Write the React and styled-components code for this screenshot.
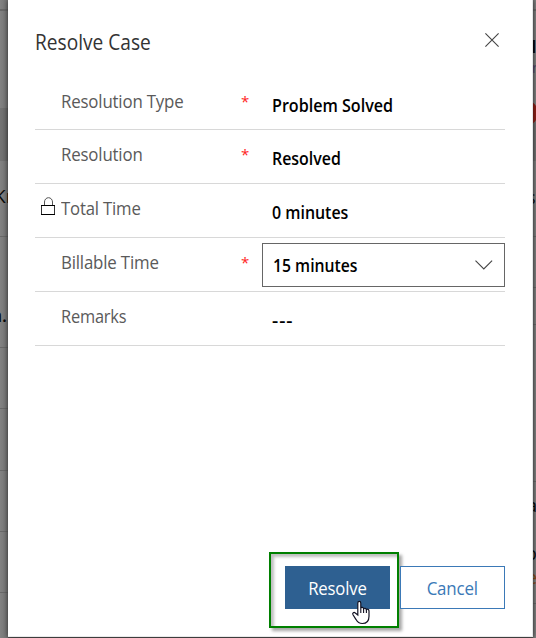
import React from "react";
import styled, { createGlobalStyle } from "styled-components";

const Global = createGlobalStyle`
  * { box-sizing: border-box; }
  html, body { margin: 0; padding: 0; overflow: hidden; }
  body { font-family: "Open Sans", "Noto Sans", sans-serif; background: #808080; }
`;

const Screen = styled.div`
  width: 536px;
  height: 638px;
  display: grid;
  grid-template-columns: 8px 525px 3px;
  background: #808080;
  overflow: hidden;
`;

const Strip = styled.div`
  display: flex;
  flex-direction: column;
  height: 638px;
  overflow: hidden;
  background: linear-gradient(to ${(p) => p.$shade}, #828282, #747474);
`;

const Segment = styled.div`
  flex: none;
  position: relative;
  height: ${(p) => p.$h}px;
  background: ${(p) => (p.$band ? "rgba(0, 0, 0, 0.1)" : "transparent")};
  border-bottom: ${(p) => (p.$line ? `${p.$line}px solid #686868` : "0")};
`;

const PageText = styled.span`
  position: absolute;
  top: ${(p) => p.$top}px;
  ${(p) => p.$side}: ${(p) => p.$offset || 0}px;
  color: ${(p) => p.$color || "#090909"};
  font-size: ${(p) => p.$size || 18}px;
  font-weight: ${(p) => p.$weight || 400};
  line-height: 20px;
  white-space: nowrap;
`;

const Badge = styled.span`
  position: absolute;
  left: -21px;
  top: -8px;
  width: 26px;
  height: 26px;
  border-radius: 50%;
  background: #8f2018;
`;

const Dialog = styled.section`
  position: relative;
  z-index: 1;
  height: 637px;
  padding: 0 27px 27px 27px;
  display: flex;
  flex-direction: column;
  background: #fff;
  border-right: 1px solid #e4e6e8;
  border-bottom: 1px solid #e9e9e9;
  box-shadow: 0 0 5px rgba(0, 0, 0, 0.65), 0 4px 0 #555;
`;

const Header = styled.header`
  flex: none;
  height: 77px;
  padding-top: 27px;
  display: flex;
  justify-content: space-between;
`;

const Condensed = styled.span`
  display: inline-block;
  white-space: nowrap;
  transform: scaleX(${(p) => p.$x});
  transform-origin: ${(p) => p.$origin || "left"} center;
  letter-spacing: ${(p) => (p.$track ? `${p.$track}px` : "inherit")};
`;

const Title = styled.h1`
  margin: 0;
  font-size: 21.5px;
  line-height: 29px;
  font-weight: 400;
  color: #333;
`;

const CloseButton = styled.button`
  width: 14px;
  height: 14px;
  margin: 6px 6px 0 0;
  padding: 0;
  border: 0;
  background: none;
  svg { display: block; }
`;

const Row = styled.div`
  flex: none;
  height: 54px;
  display: grid;
  grid-template-columns: 26px 181px 20px 1fr;
  border-bottom: 1px solid #d8d8d8;
  &:nth-of-type(1) { height: 53px; }
`;

const LockCell = styled.span`
  padding: 13px 0 0 6px;
  svg { display: block; }
`;

const Label = styled.span`
  padding-top: 12px;
  font-size: 18px;
  line-height: 24px;
  font-weight: 400;
  letter-spacing: -0.2px;
  color: #5a5a5a;
`;

const Required = styled.span`
  padding-top: 12px;
  margin-left: -1px;
  font-size: 15px;
  line-height: 24px;
  color: #f22;
`;

const Value = styled.span`
  padding: 16px 0 0 10px;
  font-size: 17.5px;
  line-height: 24px;
  font-weight: 600;
  color: #000;
`;

const Select = styled.div`
  height: 44px;
  margin-top: 5px;
  padding: 0 11px 0 10px;
  display: flex;
  align-items: center;
  justify-content: space-between;
  border: 1px solid #666;
  font-size: 17.5px;
  font-weight: 600;
  color: #000;
`;

const Footer = styled.footer`
  margin-top: auto;
  display: flex;
  justify-content: flex-end;
  gap: 10px;
`;

const Button = styled.button`
  position: relative;
  width: 105px;
  height: 43px;
  padding: 0;
  border: 1px solid ${(p) => (p.$primary ? "#2e6091" : "#3b79b7")};
  background: ${(p) => (p.$primary ? "#2e6091" : "#fff")};
  color: ${(p) => (p.$primary ? "#fff" : "#3b79b7")};
  font: 400 18px "Open Sans", sans-serif;
  letter-spacing: -0.2px;
`;

const Highlight = styled.span`
  position: absolute;
  left: -17px;
  top: -15px;
  width: 130px;
  height: 76px;
  border: 2px solid #008000;
  box-shadow: 3px 3px 3px rgba(0, 0, 0, 0.35), inset 3px 3px 3px rgba(0, 0, 0, 0.25);
  pointer-events: none;
`;

const Pointer = styled.svg`
  position: absolute;
  left: 65px;
  top: 33px;
  z-index: 2;
`;

const LockIcon = () => (
  <svg width="15" height="20" viewBox="0 0 15 20" fill="none">
    <path d="M3.5 8V5a4 4.3 0 0 1 8 0V8" stroke="#555" />
    <path d="M.5 8.5v9h13v-9" stroke="#333" />
    <path d="M0 8.5h14M0 17.5h14" stroke="#000" />
  </svg>
);

const HandPointer = () => (
  <Pointer width="20" height="26" viewBox="0 0 20 26">
    <path
      d="M6.8 15V3.2c0-2.4 3-2.4 3 0V8c.5-1.1 2.8-.8 2.8.8.7-1 2.6-.6 2.8.8 1-.9 2.6-.2 2.6 1.4v5.2c0 4.7-2.8 7.3-6.7 7.3-3.6 0-5-1.6-6.4-4.2L2 14.8c-1-1.8 1-3 2.3-1.8Z"
      fill="#fff"
      stroke="#111122"
      strokeWidth="1.2"
    />
    <path d="M9.8 8v5M12.6 8.8V13M15.4 9.6V13" stroke="#111122" strokeWidth="1.1" />
  </Pointer>
);

const fields = [
  { label: "Resolution Type", lx: 0.937, required: true, value: "Problem Solved", vx: 0.92 },
  { label: "Resolution", lx: 0.937, required: true, value: "Resolved", vx: 0.91 },
  { label: "Total Time", lx: 0.93, locked: true, value: "0 minutes", vx: 0.91 },
  { label: "Billable Time", lx: 0.937, required: true, value: "15 minutes", vx: 0.9, select: true },
  { label: "Remarks", lx: 0.91, value: "---", vx: 1.1, track: 0.9 },
];

function Field({ label, lx, required, locked, value, vx, track, select }) {
  return (
    <Row>
      <LockCell>{locked && <LockIcon />}</LockCell>
      <Label>
        <Condensed $x={lx}>{label}</Condensed>
      </Label>
      <Required>{required && "*"}</Required>
      {select ? (
        <Select>
          <Condensed $x={vx}>{value}</Condensed>
          <svg width="18" height="10" viewBox="0 0 18 10" fill="none">
            <path d="m.5.7 8.3 8.3L17.1.7" stroke="#444" strokeWidth="1.1" />
          </svg>
        </Select>
      ) : (
        <Value>
          <Condensed $x={vx} $track={track}>{value}</Condensed>
        </Value>
      )}
    </Row>
  );
}

export default function App() {
  return (
    <>
      <Global />
      <Screen>
        <Strip $shade="right">
          <Segment $h={11} $line={2} />
          <Segment $h={97} />
          <Segment $h={53} $band />
          <Segment $h={76} $line={1}>
            <PageText $side="left" $offset={-6} $top={25} $size={19}>Kn</PageText>
          </Segment>
          <Segment $h={111} $line={1}>
            <PageText $side="right" $offset={1} $top={68} $weight={600}>n.</PageText>
          </Segment>
          <Segment $h={61} $line={1} />
          <Segment $h={62} $line={1} />
          <Segment $h={61} $line={1} />
          <Segment $h={61} $line={1} />
        </Strip>
        <Dialog role="dialog">
          <Header>
            <Title>
              <Condensed $x={0.89}>Resolve Case</Condensed>
            </Title>
            <CloseButton aria-label="Close">
              <svg width="14" height="14" viewBox="0 0 14 14">
                <path d="m.4.4 13.2 13.2M13.6.4.4 13.6" stroke="#444" strokeWidth="1.1" />
              </svg>
            </CloseButton>
          </Header>
          {fields.map((f) => (
            <Field key={f.label} {...f} />
          ))}
          <Footer>
            <Button $primary>
              <Condensed $x={0.93} $origin="center">Resolve</Condensed>
              <Highlight />
              <HandPointer />
            </Button>
            <Button>
              <Condensed $x={0.94} $origin="center">Cancel</Condensed>
            </Button>
          </Footer>
        </Dialog>
        <Strip $shade="left">
          <Segment $h={11} $line={2} />
          <Segment $h={97}>
            <PageText $side="left" $offset={-11} $top={25} $weight={700}>N</PageText>
            <PageText $side="left" $offset={-1} $top={47} $size={14} $color="#50446a">r</PageText>
          </Segment>
          <Segment $h={53} $band>
            <Badge />
          </Segment>
          <Segment $h={76} $line={1}>
            <PageText $side="left" $offset={-6} $top={26}>s</PageText>
          </Segment>
          <Segment $h={51} $line={1} />
          <Segment $h={37} $line={1} />
          <Segment $h={157} $line={1} />
          <Segment $h={122} $line={1}>
            <PageText $side="left" $offset={-6} $top={13}>a</PageText>
            <PageText $side="left" $offset={-7} $top={61}>o</PageText>
            <PageText $side="left" $offset={-6} $top={85} $color="#8a4a18">e</PageText>
          </Segment>
        </Strip>
      </Screen>
    </>
  );
}
